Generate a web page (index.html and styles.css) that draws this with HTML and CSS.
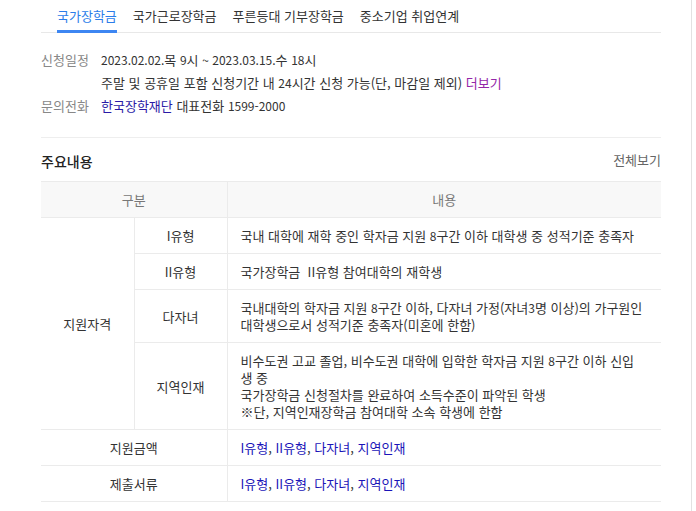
FILE: index.html
```html
<!DOCTYPE html>
<html lang="ko">
<head>
<meta charset="utf-8">
<title>국가장학금</title>
<link rel="stylesheet" href="styles.css">
</head>
<body>
<div class="page">
  <div class="content">
    <nav class="tabs">
      <a class="tab active">국가장학금</a>
      <a class="tab">국가근로장학금</a>
      <a class="tab">푸른등대 기부장학금</a>
      <a class="tab">중소기업 취업연계</a>
    </nav>

    <dl class="info">
      <div class="info-row">
        <dt>신청일정</dt>
        <dd><span class="num">2023.02.02.</span>목 <span class="num">9</span>시 <span class="num">~ 2023.03.15.</span>수 <span class="num">18</span>시<br>주말 및 공휴일 포함 신청기간 내 <span class="num">24</span>시간 신청 가능(단, 마감일 제외) <a class="more">더보기</a></dd>
      </div>
      <div class="info-row">
        <dt>문의전화</dt>
        <dd><a class="org">한국장학재단</a> 대표전화 <span class="num">1599-2000</span></dd>
      </div>
    </dl>

    <div class="section-head">
      <h2>주요내용</h2>
      <a class="all">전체보기</a>
    </div>

    <table class="main">
      <colgroup><col class="c1"><col class="c2"><col class="c3"></colgroup>
      <thead>
        <tr><th colspan="2">구분</th><th>내용</th></tr>
      </thead>
      <tbody>
        <tr><td rowspan="4" class="cat">지원자격</td><td class="sub">I유형</td><td class="desc">국내 대학에 재학 중인 학자금 지원 <span class="num">8</span>구간 이하 대학생 중 성적기준 충족자</td></tr>
        <tr><td class="sub">II유형</td><td class="desc">국가장학금&nbsp; II유형 참여대학의 재학생</td></tr>
        <tr><td class="sub">다자녀</td><td class="desc">국내대학의 학자금 지원 <span class="num">8</span>구간 이하, 다자녀 가정(자녀<span class="num">3</span>명 이상)의 가구원인<br>대학생으로서 성적기준 충족자(미혼에 한함)</td></tr>
        <tr><td class="sub">지역인재</td><td class="desc">비수도권 고교 졸업, 비수도권 대학에 입학한 학자금 지원 <span class="num">8</span>구간 이하 신입<br>생 중<br>국가장학금 신청절차를 완료하여 소득수준이 파악된 학생<br>※단, 지역인재장학금 참여대학 소속 학생에 한함</td></tr>
        <tr><td colspan="2" class="cat">지원금액</td><td class="desc"><a class="lnk">I유형</a>, <a class="lnk">II유형</a>, <a class="lnk">다자녀</a>, <a class="lnk">지역인재</a></td></tr>
        <tr><td colspan="2" class="cat">제출서류</td><td class="desc"><a class="lnk">I유형</a>, <a class="lnk">II유형</a>, <a class="lnk">다자녀</a>, <a class="lnk">지역인재</a></td></tr>
      </tbody>
    </table>
  </div>
</div>
</body>
</html>
```

FILE: styles.css
```css
html, body {
  margin: 0;
  padding: 0;
  background: #fff;
}
body {
  font-family: "Noto Sans CJK KR", "Noto Sans", sans-serif;
  font-size: 13px;
  color: #333;
}
.num {
  font-size: 12px;
}
.page {
  width: 691px;
  min-height: 511px;
  border-right: 1px solid #e2e2e2;
  box-sizing: content-box;
}
.content {
  margin-left: 41px;
  width: 620px;
}
a { text-decoration: none; cursor: pointer; }

.tabs {
  display: flex;
  gap: 16px;
  padding-left: 16px;
  border-bottom: 1px solid #e8e8e8;
  height: 32px;
}
.tab {
  display: block;
  line-height: 17px;
  padding-top: 7px;
  height: 23px;
  color: #333;
  border-bottom: 3px solid transparent;
}
.tab.active {
  color: #2b7de9;
  border-bottom-color: #3d86f2;
}

.info {
  margin: 0;
  padding: 15px 0 20px;
  border-bottom: 1px solid #eee;
}
.info-row {
  display: flex;
  line-height: 23px;
}
.info-row dt {
  width: 60px;
  flex: none;
  color: #888;
}
.info-row dd {
  margin: 0;
}
.more { color: #9326a8; }
.org { color: #2a1aa6; }

.section-head {
  display: flex;
  justify-content: space-between;
  align-items: center;
  height: 43px;
}
.section-head h2 {
  margin: 0;
  font-size: 14px;
  font-weight: 500;
  color: #222;
  padding-top: 3px;
}
.all {
  color: #666;
}

table.main {
  width: 620px;
  border-collapse: collapse;
  table-layout: fixed;
}
col.c1 { width: 93px; }
col.c2 { width: 93px; }
col.c3 { width: 434px; }
table.main th,
table.main td {
  border: 1px solid #ebebeb;
  border-left: none;
  border-right: none;
  padding: 9px 13px;
  line-height: 17px;
  font-weight: normal;
  vertical-align: middle;
}
table.main thead th {
  background: #f8f8f8;
  color: #777;
  text-align: center;
}
table.main th:first-child,
table.main td.cat,
table.main td.sub {
  border-right: 1px solid #ebebeb;
  text-align: center;
}
table.main td.desc {
  white-space: nowrap;
}
.lnk { color: #1a14b8; }
```
